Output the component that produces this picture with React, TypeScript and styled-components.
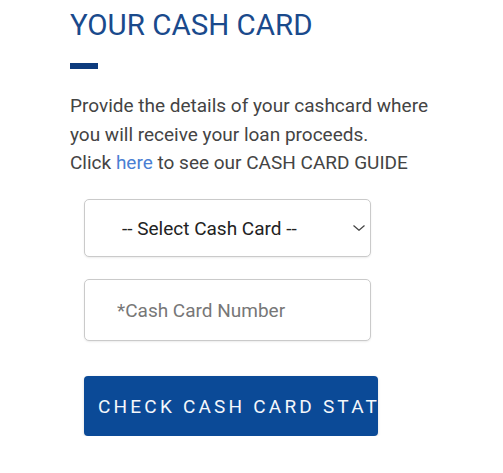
import React from 'react';
import styled, { createGlobalStyle } from 'styled-components';

const GlobalStyle = createGlobalStyle`
  body {
    margin: 0;
    background: #ffffff;
    font-family: Roboto, "Liberation Sans", Arial, sans-serif;
  }
`;

const Page = styled.div`
  padding: 8px 70px 0;
`;

const Title = styled.h2`
  margin: 0;
  font-size: 29.5px;
  line-height: 34px;
  font-weight: 400;
  color: #1a4a8c;
`;

const Bar = styled.div`
  width: 28px;
  height: 6px;
  margin-top: 21px;
  background: #0d3b7d;
`;

const Intro = styled.p`
  margin: 23px 0 0;
  font-size: 19px;
  line-height: 28.7px;
  color: #444444;
`;

const Link = styled.a`
  color: #4a7fd3;
  text-decoration: none;
`;

const Form = styled.div`
  display: flex;
  flex-direction: column;
  margin: 21px 0 0 14px;
`;

const SelectWrap = styled.div`
  position: relative;
  width: 287px;
  height: 58px;
`;

const Select = styled.select`
  appearance: none;
  width: 100%;
  height: 100%;
  box-sizing: border-box;
  padding: 0 40px 0 37px;
  border: 1px solid #cacaca;
  border-radius: 5px;
  background: #ffffff;
  box-shadow: 0 1px 2px rgba(0, 0, 0, 0.08);
  font-family: inherit;
  font-size: 19px;
  color: #222222;
  outline: none;
`;

const Chevron = styled.svg`
  position: absolute;
  right: 6px;
  top: 26px;
  width: 12px;
  height: 6px;
  pointer-events: none;
`;

const Input = styled.input`
  width: 287px;
  height: 62px;
  box-sizing: border-box;
  margin-top: 22px;
  padding: 0 20px 0 32px;
  border: 1px solid #cacaca;
  border-radius: 5px;
  box-shadow: 0 1px 2px rgba(0, 0, 0, 0.08);
  font-family: inherit;
  font-size: 19px;
  color: #222222;
  outline: none;

  &::placeholder {
    color: #777777;
  }
`;

const Button = styled.button`
  width: 294px;
  height: 60px;
  margin-top: 35px;
  padding: 0 0 0 14px;
  border: none;
  border-radius: 4px;
  background: #0b4a97;
  box-shadow: 0 1px 3px rgba(0, 0, 0, 0.15);
  color: #f4f7fb;
  font-family: inherit;
  font-size: 19px;
  letter-spacing: 3.2px;
  text-align: left;
  white-space: nowrap;
  overflow: hidden;
`;

export default function App() {
  return (
    <>
      <GlobalStyle />
      <Page>
        <Title>YOUR CASH CARD</Title>
        <Bar />
        <Intro>
          Provide the details of your cashcard where
          <br />
          you will receive your loan proceeds.
          <br />
          Click <Link href="#">here</Link> to see our CASH CARD GUIDE
        </Intro>
        <Form>
          <SelectWrap>
            <Select defaultValue="">
              <option value="">-- Select Cash Card --</option>
            </Select>
            <Chevron viewBox="0 0 12 6">
              <path d="M0.5 0.5 L6 5.3 L11.5 0.5" fill="none" stroke="#444" strokeWidth="1.2" />
            </Chevron>
          </SelectWrap>
          <Input placeholder="*Cash Card Number" />
          <Button>CHECK CASH CARD STATUS</Button>
        </Form>
      </Page>
    </>
  );
}
